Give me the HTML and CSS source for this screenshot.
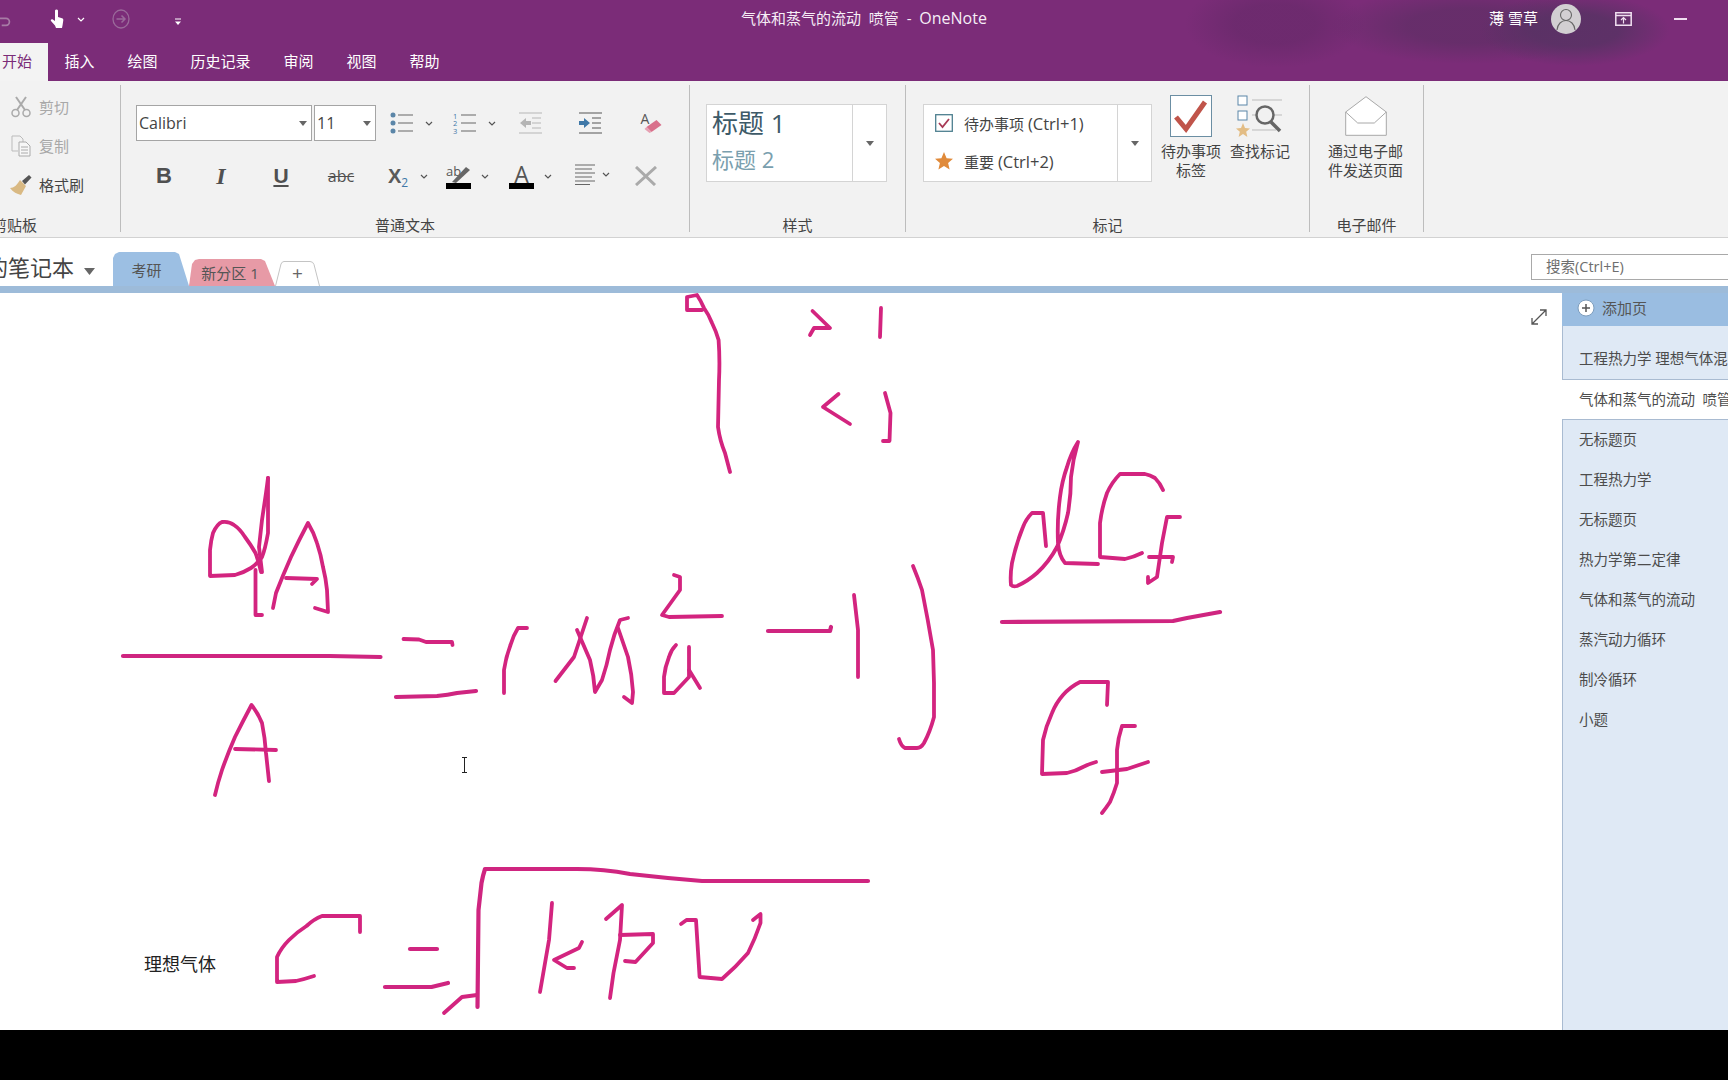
FILE: index.html
```html
<!DOCTYPE html>
<html lang="zh-CN">
<head>
<meta charset="utf-8">
<title>气体和蒸气的流动 喷管 - OneNote</title>
<link rel="stylesheet" href="styles.css">
</head>
<body>
<svg class="defs" aria-hidden="true">
  <symbol id="chev" viewBox="0 0 8 5"><path d="M1 1l3 3 3-3" fill="none" stroke="currentColor" stroke-width="1.2"/></symbol>
  <symbol id="tri" viewBox="0 0 8 5"><path d="M0 0h8L4 5z" fill="currentColor"/></symbol>
</svg>
<div class="app">
  <header class="head">
    <div class="titlebar">
      <div class="qat">
        <svg class="q-undo" viewBox="0 0 14 14"><path d="M-3 4h10a4 4 0 0 1 0 8H2" fill="none" stroke="#a77ba5" stroke-width="2"/></svg>
        <svg class="q-touch" viewBox="0 0 14 20"><path d="M5 1.5a1.6 1.6 0 0 1 3 0V8l4 1.2c1 .3 1.4 1 1.3 2L12.6 16l-.6 3H6l-1-2.5L1 12c-.8-1.100.6-2.300 1.800-1.500L5 12z" fill="#fff"/></svg>
        <svg class="chev-w"><use href="#chev"/></svg>
        <svg class="q-next" viewBox="0 0 18 20"><ellipse cx="9" cy="10" rx="8" ry="9" fill="none" stroke="#9a6a9a" stroke-width="1.300"/><path d="M4.500 10h8M9.500 6.500l3.500 3.500-3.500 3.500" fill="none" stroke="#9a6a9a" stroke-width="1.500"/></svg>
        <svg class="q-more" viewBox="0 0 8 8"><path d="M1 1h6" stroke="#fff"/><path d="M1 3.500h6L4 7z" fill="#fff"/></svg>
      </div>
      <div class="doc-title">气体和蒸气的流动&nbsp;&nbsp;喷管&nbsp;&nbsp;-&nbsp;&nbsp;<span class="latin">OneNote</span></div>
      <div class="win">
        <span class="user">薄 雪草</span>
        <span class="avatar"><svg viewBox="0 0 30 30"><circle cx="15" cy="11" r="5.500" fill="none" stroke="#666" stroke-width="1.100"/><path d="M6 26c.5-6 4.500-9.500 9-9.500s8.500 3.500 9 9.500" fill="none" stroke="#666" stroke-width="1.100"/></svg></span>
        <svg class="w-restore" viewBox="0 0 17 14"><path d="M.8.8h15.400v12.400H.8zM.8 3.500h15.400" fill="none" stroke="#f0dff0" stroke-width="1.500"/><path d="M8.500 11.500V6M6 8l2.500-2.500L11 8" fill="none" stroke="#f0dff0" stroke-width="1.200"/></svg>
        <span class="w-min"></span>
      </div>
    </div>
    <nav class="menu">
      <span class="menu-item active">开始</span>
      <span class="menu-item">插入</span>
      <span class="menu-item">绘图</span>
      <span class="menu-item">历史记录</span>
      <span class="menu-item">审阅</span>
      <span class="menu-item">视图</span>
      <span class="menu-item">帮助</span>
    </nav>
  </header>

  <section class="ribbon">
    <div class="group g-clip">
      <div class="g-body clip-rows">
        <div class="clip-row off">
          <svg class="ico" viewBox="0 0 22 22"><path d="M6 1l9 13M16 1L7 14" fill="none" stroke="#aaa" stroke-width="2"/><circle cx="5.500" cy="17" r="3.500" fill="none" stroke="#aaa" stroke-width="1.500"/><circle cx="16.500" cy="17" r="3.500" fill="none" stroke="#aaa" stroke-width="1.500"/></svg>
          <span>剪切</span>
        </div>
        <div class="clip-row off">
          <svg class="ico" viewBox="0 0 22 22"><path d="M2 1h8l3 3v3M2 1v15h6" fill="none" stroke="#bbb"/><path d="M9 7h7l4 4v10H9zM11 12h7M11 15h7M11 18h7" fill="#f7f7f7" stroke="#aaa"/></svg>
          <span>复制</span>
        </div>
        <div class="clip-row">
          <svg class="ico" viewBox="0 0 22 22"><path d="M10 6l6 6-5 9C7 20 3 18 0 14c4 0 7-3 10-8z" fill="#d9b983"/><path d="M12 7l7-6 2.500 2.500-6.500 7z" fill="#555"/></svg>
          <span>格式刷</span>
        </div>
      </div>
      <div class="g-label clip-label">剪贴板</div>
    </div>

    <div class="group g-text">
      <div class="g-body text-body">
        <div class="t-row">
          <div class="combo c-font"><span>Calibri</span><svg class="tri"><use href="#tri"/></svg></div>
          <div class="combo c-size"><span>11</span><svg class="tri"><use href="#tri"/></svg></div>
          <div class="tool m-bullets">
            <svg class="i23" viewBox="0 0 23 22"><g fill="#5b86a8"><circle cx="3" cy="3" r="2.500"/><circle cx="3" cy="11" r="2.500"/><circle cx="3" cy="19" r="2.500"/></g><path d="M8 3h15M8 11h15M8 19h15" stroke="#666" stroke-width="1.200"/></svg>
            <svg class="chev"><use href="#chev"/></svg>
          </div>
          <div class="tool m-numbers">
            <svg class="i23" viewBox="0 0 23 22"><g class="nums"><text x="0" y="6.500">1</text><text x="0" y="14">2</text><text x="0" y="21.500">3</text></g><path d="M8 3h15M8 11h15M8 19h15" stroke="#666" stroke-width="1.200"/></svg>
            <svg class="chev"><use href="#chev"/></svg>
          </div>
          <div class="tool m-outdent">
            <svg class="i23" viewBox="0 0 23 22"><path d="M0 1h23M13 6h9M13 11h9M13 16h9M0 21h23" stroke="#b5b5b5" stroke-width="1.200"/><path d="M1 11l6-5v3h5v4H7v3z" fill="#b5b5b5"/></svg>
          </div>
          <div class="tool m-indent">
            <svg class="i23" viewBox="0 0 23 22"><path d="M0 1h23M13 6h9M13 11h9M13 16h9M0 21h23" stroke="#555" stroke-width="1.200"/><path d="M11 11L5 6v3H0v4h5v3z" fill="#3f78a8"/></svg>
          </div>
          <div class="tool m-eraser">
            <svg class="i23" viewBox="0 0 22 22"><text class="era-a" x="0" y="12">A</text><path d="M6 15l10-7 5 5-10 7z" fill="#d9708b"/><path d="M6 15l5 5-2 1-5-4z" fill="#e6a0b2"/></svg>
          </div>
        </div>
        <div class="t-row t-row2">
          <span class="fmt m-b">B</span>
          <span class="fmt m-i">I</span>
          <span class="fmt m-u">U</span>
          <span class="fmt m-s">abc</span>
          <div class="tool m-sub"><span class="sub-x">X<sub>2</sub></span><svg class="chev"><use href="#chev"/></svg></div>
          <div class="tool m-high">
            <svg class="i25" viewBox="0 0 25 24"><text class="hl-t" x="0" y="11">ab</text><path d="M6 17l14-15 4 3-14 13z" fill="#666"/><rect y="18" width="25" height="6" fill="#000"/></svg>
            <svg class="chev c-near"><use href="#chev"/></svg>
          </div>
          <div class="tool m-color">
            <svg class="i25" viewBox="0 0 25 24"><text class="col-t" x="12.500" y="17.500">A</text><rect y="18" width="25" height="6" fill="#000"/></svg>
            <svg class="chev c-near"><use href="#chev"/></svg>
          </div>
          <div class="tool m-align">
            <svg class="i20" viewBox="0 0 20 21"><path d="M0 1h20M0 5h17M0 9h20M0 13h17M0 17h20M0 20.500h15" stroke="#666" stroke-width="1"/></svg>
            <svg class="chev c-tight"><use href="#chev"/></svg>
          </div>
          <div class="tool m-clear">
            <svg class="i22" viewBox="0 0 22 20"><path d="M1 1l19 18M21 1L1 19" stroke="#aaa" stroke-width="3"/></svg>
          </div>
        </div>
      </div>
      <div class="g-label">普通文本</div>
    </div>

    <div class="group g-style">
      <div class="g-body style-body">
        <div class="gallery style-gal">
          <div class="style-list">
            <div class="h1">标题 1</div>
            <div class="h2">标题 2</div>
          </div>
          <div class="gal-more"><svg class="tri"><use href="#tri"/></svg></div>
        </div>
      </div>
      <div class="g-label">样式</div>
    </div>

    <div class="group g-tags">
      <div class="g-body tags-body">
        <div class="gallery tag-gal">
          <div class="tag-list">
            <div class="tag-row">
              <svg class="tag-ico" viewBox="0 0 18 18"><rect x=".700" y=".700" width="16.600" height="16.600" fill="#fff" stroke="#4d7f8f" stroke-width="1.300"/><path d="M4 9l3.500 4L14 5" fill="none" stroke="#a83a55" stroke-width="1.800"/></svg>
              <span>待办事项 <span class="keys">(Ctrl+1)</span></span>
            </div>
            <div class="tag-row">
              <svg class="tag-ico" viewBox="0 0 18 18"><path d="M9 0l2.600 6.200 6.400.5-4.900 4.200 1.500 6.600L9 14l-5.600 3.500 1.500-6.600L0 6.700l6.400-.5z" fill="#e08a3a"/></svg>
              <span>重要 <span class="keys">(Ctrl+2)</span></span>
            </div>
          </div>
          <div class="gal-more"><svg class="tri"><use href="#tri"/></svg></div>
        </div>
        <div class="bigbtn b-todo">
          <svg class="big" viewBox="0 0 42 42"><rect x=".500" y=".500" width="41" height="41" fill="#fff" stroke="#6b8ea3"/><path d="M6 22l10 12L35 7" fill="none" stroke="#c0544a" stroke-width="5"/></svg>
          <span>待办事项<br>标签</span>
        </div>
        <div class="bigbtn b-find">
          <svg class="big wide" viewBox="0 0 46 42"><rect x="1" y="1" width="9" height="9" fill="#fff" stroke="#5b86a8"/><rect x="1" y="16" width="9" height="9" fill="#fff" stroke="#5b86a8"/><path d="M15 5h30M15 20h30M15 35h24" stroke="#bbb"/><path d="M6 28l2 5 5 .4-3.800 3.300 1.200 5.300L6 39l-4.400 3 1.200-5.300L-1 33.400l5-.4z" fill="#e3bd85"/><circle cx="28" cy="20" r="8.500" fill="#f1f1f1" stroke="#666" stroke-width="2.500"/><path d="M34 27l9 9" stroke="#666" stroke-width="3.500"/></svg>
          <span>查找标记</span>
        </div>
      </div>
      <div class="g-label">标记</div>
    </div>

    <div class="group g-mail">
      <div class="g-body mail-body">
        <div class="bigbtn">
          <svg class="big" viewBox="0 0 42 40"><path d="M.700 16L21 .700 41.300 16v23.300H.700z" fill="#fff" stroke="#a8a8a8"/><path d="M.700 16l12 11h16.600l12-11" fill="none" stroke="#a8a8a8"/></svg>
          <span>通过电子邮<br>件发送页面</span>
        </div>
      </div>
      <div class="g-label">电子邮件</div>
    </div>
  </section>

  <section class="sections">
    <div class="notebook">的笔记本</div>
    <svg class="nb-tri"><use href="#tri"/></svg>
    <div class="stab stab-blue">考研</div>
    <div class="stab stab-pink">新分区 1</div>
    <div class="stab stab-add">
      <svg class="add-shape" viewBox="0 0 45 25" preserveAspectRatio="none"><path d="M.500 25L6 3q1-2.500 3-2.500h26q3 0 4 3L44.500 25" fill="#fff" stroke="#c4c4c4"/></svg>
      <span class="add-plus">+</span>
    </div>
    <div class="search">搜索(Ctrl+E)</div>
  </section>
  <div class="stripe"></div>

  <main class="main">
    <div class="canvas">
      <svg class="ink" viewBox="0 293 1562 737">
        <g fill="none" stroke="#d3247f" stroke-width="3.800" stroke-linecap="round" stroke-linejoin="round">
          <path d="M702 310L687 310L687 297L697 295Q701 301 704 308Q709 315 712 323Q716 331 718.600 340Q720 360 719 380L718 427Q720 441 725 453L730 472"/>
          <path d="M812.500 311L830 328L814 328L810 335"/>
          <path d="M881 308L880 337"/>
          <path d="M838.500 394L823 407L850 424"/>
          <path d="M885 393L890.500 413L889.500 441L883 441"/>

          <path d="M268 478Q267 486 266 493L262 520L259 547L262 572"/>
          <path d="M268 478L268 533Q265 550 262 557Q256 565 251 568Q243 573 235 575L210 576L210 550Q211 540 213 533Q217 524 222 522Q229 521 234 525Q240 529 245 537Q251 545 255.500 553Q259 562 261 572"/>
          <path d="M255.500 570L255.500 615L262 615"/>
          <path d="M273 608L276 593Q283 575 291 557Q299 540 308 523Q314 533 317 543Q321 555 323 567Q326 579 327 590L328 612L315 608"/>
          <path d="M286 578L317 579L312 584"/>
          <path class="thick" d="M123 656L329.500 656L380.500 657"/>
          <path d="M403.500 639L419 639.500L426 642L452 642L452.500 645"/>
          <path class="thick" d="M396 697L437 696Q448 695 457 693L476 691"/>
          <path d="M527 628L518 628Q513 636 510.500 645Q506 657 504 670L504 693"/>
          <path d="M555.500 681L574 657L587 618"/>
          <path d="M577 630L590 660Q594 676 595 692L602 680Q607 665 610 650Q614 634 620 620L628 618"/>
          <path d="M618 628L628 657Q632 675 633 692L632 703L624 697"/>
          <path d="M674 575L680 577L680 590L662 615L669 617L722 616"/>
          <path d="M676 645Q671 650 669 657Q665 667 664 677L664 693L674 693L689 677L689 647"/>
          <path d="M689 670L700 688"/>
          <path class="thick" d="M768 631L830 631L831 627"/>
          <path d="M854 595L858 630L858 677"/>
          <path d="M215 795Q218 782 222 770Q228 753 235 737Q243 721 251.500 705Q258 713 262 723Q265 738 266 753L269 781"/>
          <path d="M235 749L276 750"/>

          <path d="M913 566Q918 578 922 590Q928 620 933 650Q934.500 683 934 717Q930 732 924 743Q921 748 917 748L905 748Q901 746 899 739"/>
          <path d="M1046 546L1043 513L1032 513Q1026 519 1023 527Q1016 544 1012 563Q1010 575 1011 585Q1013 587 1017 586Q1028 581 1037 573Q1049 562 1057 547Q1064 531 1068 513Q1071 495 1071 477Q1073 459 1078 442Q1071 453 1067 467Q1062 481 1060 497Q1057 520 1058 543Q1059 556 1065 563L1098 564"/>
          <path d="M1163 490Q1160 483 1155 478Q1150 475 1145 474L1120 474Q1112 482 1107 493Q1102 507 1100 523L1100 557L1125 559Q1134 557 1142 553"/>
          <path d="M1180 517L1167 517L1162 543L1157 577L1148 583L1148 577"/>
          <path d="M1149 557L1173 557L1172 562"/>
          <path class="thick" d="M1002 622L1173 621L1187 618L1220 612"/>
          <path d="M1107 705L1108 682L1080 682Q1070 687 1063 695Q1056 703 1052 713Q1046 726 1043 740L1042 774L1067 773Q1076 771 1083 767Q1089 764 1096 762"/>
          <path d="M1135 726L1122 726Q1118 738 1117 750L1117 783Q1114 793 1110 802Q1106 808 1102 813"/>
          <path d="M1102 772L1127 769L1148 762"/>

          <path class="thick" d="M868 881L702 881Q665 878 630 874Q604 869 577 869L485 869Q483 875 481.500 883L478.500 910L477.500 1007"/>
          <path d="M477 995L462 997L444 1013"/>
          <path d="M360 932L360 916L322 916Q314 919 306.500 926Q297 932 289 940Q281 948 277 957L277 982L296 981Q305 979 314 976"/>
          <path class="thick" d="M410 949L437 949"/>
          <path class="thick" d="M385 987L431.500 987L448 983"/>
          <path d="M552 903L549 940L540 992"/>
          <path d="M582 942L579 948L554 960L567 968L574 968"/>
          <path d="M606 919L622 905L620 940L613.500 973L610 998"/>
          <path d="M620 935L653 934L653 943L635.500 962L625 961"/>
          <path d="M681 924L686.500 920L696 920L699.600 977L722 979Q736 967 748 953Q755 939 760.500 923L760.500 914L753 920"/>
        </g>
      </svg>
      <div class="note">理想气体</div>
      <svg class="ibeam" viewBox="0 0 7 16"><path d="M1 .500h5M1 15.500h5M3.500.500v15" fill="none" stroke="#222"/></svg>
      <svg class="expand" viewBox="0 0 16 16"><path d="M1 15L15 1M9 1h6v6M1 9v6h6" fill="none" stroke="#555" stroke-width="1.300"/></svg>
    </div>
    <aside class="pages">
      <div class="add-page">
        <svg class="add-ico" viewBox="0 0 18 18"><circle cx="9" cy="9" r="8" fill="#fff" stroke="#7d9dbd"/><path d="M5 9h8M9 5v8" stroke="#555" stroke-width="1.500"/></svg>
        <span>添加页</span>
      </div>
      <div class="page page-first">工程热力学 理想气体混合物</div>
      <div class="page page-current">气体和蒸气的流动&nbsp;&nbsp;喷管</div>
      <div class="page-list">
        <div class="page">无标题页</div>
        <div class="page">工程热力学</div>
        <div class="page">无标题页</div>
        <div class="page">热力学第二定律</div>
        <div class="page">气体和蒸气的流动</div>
        <div class="page">蒸汽动力循环</div>
        <div class="page">制冷循环</div>
        <div class="page">小题</div>
      </div>
    </aside>
  </main>
  <footer class="blackbar"></footer>
</div>
</body>
</html>
```

FILE: styles.css
```css
* { box-sizing: border-box; }
html, body { margin: 0; height: 100%; overflow: hidden; background: #000; }
body { font-family: "Open Sans", "Noto Sans CJK SC", sans-serif; font-size: 15px; color: #444; }
.defs { display: none; }
.app { width: 1728px; height: 1080px; display: flex; flex-direction: column; overflow: hidden; }

/* header */
.head {
  height: 81px; flex: none; color: #fff;
  background:
    radial-gradient(ellipse 95px 36px at 1575px 30px, rgba(88,50,100,.85) 45%, rgba(88,50,100,0) 100%),
    radial-gradient(ellipse 140px 38px at 1470px 26px, rgba(96,46,102,.75) 45%, rgba(96,46,102,0) 100%),
    radial-gradient(ellipse 90px 44px at 1275px 24px, rgba(106,42,108,.8) 45%, rgba(106,42,108,0) 100%),
    #7b2c78;
}
.titlebar { height: 43px; display: grid; grid-template-columns: 1fr auto 1fr; align-items: center; padding-bottom: 5px; }
.qat { display: flex; align-items: center; }
.q-undo { width: 12px; height: 14px; margin-top: 4px; }
.q-touch { width: 14px; height: 20px; margin-left: 38px; }
.chev-w { width: 8px; height: 5px; margin-left: 13px; color: #fff; }
.q-next { width: 18px; height: 20px; margin-left: 27px; }
.q-more { width: 8px; height: 8px; margin-left: 44px; margin-top: 6px; }
.doc-title { font-size: 15px; line-height: 20px; color: #f6eef6; white-space: nowrap; margin-bottom: 3px; }
.doc-title .latin { font-size: 16px; }
.win { display: flex; align-items: center; justify-content: flex-end; }
.user { font-size: 15px; margin-right: 13px; margin-bottom: 3px; }
.avatar { width: 30px; height: 30px; border-radius: 50%; background: #d2cfd2; display: flex; }
.avatar svg { width: 30px; height: 30px; }
.w-restore { width: 17px; height: 14px; margin-left: 34px; }
.w-min { width: 13px; height: 1.500px; background: #f0dff0; margin-left: 42px; margin-right: 41px; }

.menu { height: 38px; display: flex; align-items: stretch; }
.menu-item { padding: 0 16.500px; line-height: 36px; font-size: 15px; color: #fff; white-space: nowrap; }
.menu-item.active { background: #f3f3f3; color: #7b2c78; padding: 0 16px 0 2px; }

/* ribbon */
.ribbon { height: 157px; flex: none; display: flex; background: #f2f2f2; border-bottom: 1px solid #d2d2d2; padding-top: 4px; }
.group { height: 147px; display: flex; flex-direction: column; border-right: 1px solid #bdbdbd; flex: none; }
.g-body { flex: 1; min-height: 0; }
.g-label { height: 20px; line-height: 26px; text-align: center; font-size: 15px; color: #444; white-space: nowrap; }
.ico { width: 22px; height: 22px; flex: none; }

.g-clip { width: 121px; }
.clip-rows { padding-top: 2px; }
.clip-row { height: 39px; display: flex; align-items: center; gap: 7px; padding-left: 10px; font-size: 15px; color: #444; }
.clip-row.off { color: #a8a8a8; }
.clip-label { text-align: left; margin-left: -8px; }

.g-text { width: 569px; }
.text-body { padding-left: 15px; }
.t-row { display: flex; align-items: center; height: 36px; margin-top: 20px; }
.t-row2 { margin-top: 17px; }
.combo { height: 36px; background: #fff; border: 1px solid #a5a5a5; display: flex; align-items: center; justify-content: space-between; padding: 0 4px 0 2px; font-size: 16px; color: #444; }
.c-font { width: 176px; }
.c-size { width: 62px; margin-left: 2px; }
.tri { width: 8px; height: 5px; color: #666; flex: none; }
.chev { width: 8px; height: 5px; color: #555; margin-left: 12px; flex: none; }
.c-near { margin-left: 10px; }
.c-tight { margin-left: 7px; }
.tool { display: flex; align-items: center; flex: none; }
.i23 { width: 23px; height: 22px; overflow: visible; }
.i25 { width: 25px; height: 24px; margin-top: 2px; overflow: visible; }
.i20 { width: 20px; height: 21px; }
.i22 { width: 22px; height: 20px; }
.nums text { font-size: 7.500px; fill: #3f78a8; font-family: "Open Sans", sans-serif; }
.era-a { font-size: 14px; fill: #555; font-family: "Open Sans", sans-serif; }
.hl-t { font-size: 13px; fill: #555; font-family: "Open Sans", sans-serif; }
.col-t { font-size: 23px; fill: #555; text-anchor: middle; font-family: "Open Sans", sans-serif; }
.m-bullets { margin-left: 14px; }
.m-numbers { margin-left: 20px; }
.m-outdent { margin-left: 23px; }
.m-indent { margin-left: 37px; }
.m-eraser { margin-left: 38px; }

.fmt { width: 28px; text-align: center; flex: none; color: #505050; line-height: 36px; }
.m-b { margin-left: 14px; font: bold 22px/36px "Liberation Sans", sans-serif; }
.m-i { margin-left: 29px; font: italic bold 24px/36px "Liberation Serif", serif; }
.m-u { margin-left: 32px; font: bold 21px/36px "Liberation Sans", sans-serif; text-decoration: underline; text-underline-offset: 2px; }
.m-s { margin-left: 32px; font: 16px/36px "Open Sans", sans-serif; text-decoration: line-through; }
.m-sub { margin-left: 33px; }
.sub-x { font: bold 20px/36px "Liberation Sans", sans-serif; color: #5a5a5a; width: 20px; white-space: nowrap; }
.sub-x sub { font: 12px "Open Sans", sans-serif; color: #3f78a8; vertical-align: -4px; }
.m-high { margin-left: 18px; }
.m-color { margin-left: 20px; }
.m-align { margin-left: 23px; margin-top: -3px; }
.m-clear { margin-left: 25px; }

.gallery { height: 78px; background: #fff; border: 1px solid #d4d4d4; display: flex; }
.gal-more { border-left: 1px solid #d4d4d4; display: flex; align-items: center; justify-content: center; flex: none; width: 34px; }
.g-style { width: 216px; }
.style-body { padding: 19px 0 0 16px; }
.style-gal { width: 181px; }
.style-list { flex: 1; padding-left: 5px; }
.h1 { font-size: 26px; line-height: 36px; margin-top: 0; color: #3d5a68; }
.h2 { font-size: 22px; line-height: 36px; color: #7a9fae; }

.g-tags { width: 404px; }
.tags-body { display: flex; align-items: flex-start; padding: 10px 0 0 17px; }
.tag-gal { width: 229px; margin-top: 9px; flex: none; }
.tag-list { flex: 1; padding-left: 11px; margin-top: -1px; }
.tag-row { height: 38px; display: flex; align-items: center; gap: 11px; font-size: 15px; color: #444; white-space: nowrap; }
.keys { font-size: 16.500px; }
.tag-ico { width: 18px; height: 18px; flex: none; }
.bigbtn { width: 60px; flex: none; display: flex; flex-direction: column; align-items: center; text-align: center; font-size: 15px; line-height: 19px; color: #444; white-space: nowrap; }
.bigbtn span { margin-top: 5px; }
.big { width: 42px; height: 42px; display: block; }
.big.wide { width: 46px; overflow: visible; }
.b-todo, .b-find { margin-left: 9px; }
.g-mail { width: 114px; }
.mail-body { display: flex; justify-content: center; padding-top: 10px; padding-right: 2px; }

/* section tabs */
.sections { height: 48px; flex: none; display: flex; align-items: flex-end; background: #fff; }
.notebook { margin-left: -14px; width: 88px; height: 36px; font-size: 22px; line-height: 36px; color: #444; white-space: nowrap; flex: none; position: relative; top: -1px; }
.nb-tri { width: 11px; height: 7px; color: #666; margin: 0 18px 11px 10px; flex: none; }
.stab { flex: none; display: flex; align-items: center; justify-content: center; white-space: nowrap; font-size: 15px; color: #555; }
.stab-blue { width: 76px; height: 34px; background: #9cbfe3; clip-path: polygon(0 6px, 2px 2px, 6px 0, 62px 0, 66px 2px, 100% 100%, 0 100%); padding-right: 9px; }
.stab-pink { width: 86px; height: 27px; background: #e79aa6; clip-path: polygon(0 100%, 3px 5px, 6px 1px, 10px 0, 72px 0, 76px 2px, 100% 100%); padding-right: 4px; }
.stab-add { width: 45px; height: 25px; position: relative; }
.add-shape { position: absolute; inset: 0; width: 100%; height: 100%; }
.add-plus { position: relative; font-size: 19px; line-height: 25px; color: #666; }
.search { margin-left: auto; width: 210px; flex: none; height: 26px; margin-bottom: 6px; margin-right: -13px; border: 1px solid #a9a9a9; padding-left: 14px; line-height: 24px; font-size: 14.500px; color: #6e6e6e; background: #fff; white-space: nowrap; }
.stripe { height: 7px; flex: none; background: #9dbbd9; }

/* main */
.main { flex: 1; min-height: 0; display: flex; background: #fff; }
.canvas { flex: 1; position: relative; overflow: hidden; }
.ink { display: block; width: 1562px; height: 737px; }
.ink .thick { stroke-width: 4.200; stroke: #cf2580; }
.note { position: absolute; left: 144px; top: 658px; font-size: 18px; line-height: 26px; color: #222; white-space: nowrap; }
.ibeam { position: absolute; left: 461px; top: 464px; width: 7px; height: 16px; }
.expand { position: absolute; left: 1531px; top: 16px; width: 16px; height: 16px; }

.pages { width: 166px; flex: none; display: flex; flex-direction: column; background: #fff; overflow: hidden; }
.add-page { height: 33px; flex: none; background: #9abde1; display: flex; align-items: center; gap: 7px; padding: 0 0 4px 15px; color: #555; font-size: 15px; }
.add-ico { width: 18px; height: 18px; flex: none; }
.page { height: 40px; flex: none; line-height: 40px; padding-left: 16px; font-size: 14.500px; color: #4c4c4c; white-space: nowrap; }
.page-first { height: 54px; line-height: 20px; padding-top: 23px; background: #dfe9f5; border-left: 1px solid #a9bbd1; border-bottom: 1px solid #a9bbd1; }
.page-current { height: 39px; line-height: 39px; padding-left: 17px; background: #fff; }
.page-list { flex: 1; background: #dfe9f5; border-left: 1px solid #a9bbd1; border-top: 1px solid #a9bbd1; }

.blackbar { height: 50px; flex: none; background: #000; }
```
